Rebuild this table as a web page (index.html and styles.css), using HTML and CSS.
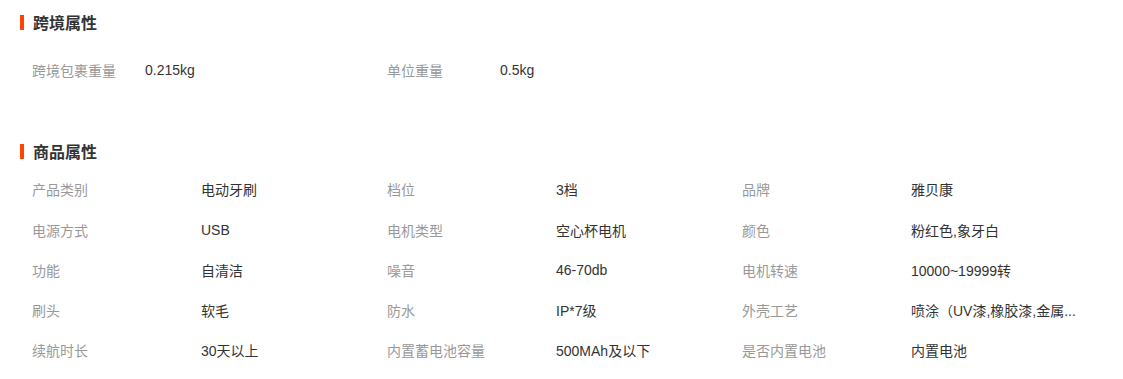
FILE: index.html
```html
<!DOCTYPE html>
<html lang="zh-CN">
<head>
<meta charset="utf-8">
<title>属性</title>
<link rel="stylesheet" href="styles.css">
</head>
<body>
<section class="block block-cross">
  <h2 class="block-title">跨境属性</h2>
  <div class="attr-list attr-list-cross">
    <div class="attr"><span class="attr-label">跨境包裹重量</span><span class="attr-value">0.215kg</span></div>
    <div class="attr"><span class="attr-label">单位重量</span><span class="attr-value">0.5kg</span></div>
  </div>
</section>
<section class="block block-goods">
  <h2 class="block-title">商品属性</h2>
  <div class="attr-list attr-list-goods">
    <div class="attr"><span class="attr-label">产品类别</span><span class="attr-value">电动牙刷</span></div>
    <div class="attr"><span class="attr-label">档位</span><span class="attr-value">3档</span></div>
    <div class="attr"><span class="attr-label">品牌</span><span class="attr-value">雅贝康</span></div>
    <div class="attr"><span class="attr-label">电源方式</span><span class="attr-value">USB</span></div>
    <div class="attr"><span class="attr-label">电机类型</span><span class="attr-value">空心杯电机</span></div>
    <div class="attr"><span class="attr-label">颜色</span><span class="attr-value">粉红色,象牙白</span></div>
    <div class="attr"><span class="attr-label">功能</span><span class="attr-value">自清洁</span></div>
    <div class="attr"><span class="attr-label">噪音</span><span class="attr-value">46-70db</span></div>
    <div class="attr"><span class="attr-label">电机转速</span><span class="attr-value">10000~19999转</span></div>
    <div class="attr"><span class="attr-label">刷头</span><span class="attr-value">软毛</span></div>
    <div class="attr"><span class="attr-label">防水</span><span class="attr-value">IP*7级</span></div>
    <div class="attr"><span class="attr-label">外壳工艺</span><span class="attr-value">喷涂（UV漆,橡胶漆,金属...</span></div>
    <div class="attr"><span class="attr-label">续航时长</span><span class="attr-value">30天以上</span></div>
    <div class="attr"><span class="attr-label">内置蓄电池容量</span><span class="attr-value">500MAh及以下</span></div>
    <div class="attr"><span class="attr-label">是否内置电池</span><span class="attr-value">内置电池</span></div>
  </div>
</section>
</body>
</html>
```

FILE: styles.css
```css
html, body {
  margin: 0;
  padding: 0;
  background: #fff;
}
body {
  font-family: "Liberation Sans", "Noto Sans CJK SC", sans-serif;
  font-size: 14px;
  color: #333;
}
.block {
  padding: 0 20px;
}
.block-cross {
  padding-top: 7px;
}
.block-goods {
  padding-top: 46px;
}
.block-title {
  display: flex;
  align-items: center;
  gap: 9px;
  margin: 0;
  height: 30px;
  font-size: 16px;
  font-weight: bold;
  color: #333;
}
.block-title::before {
  content: "";
  width: 4px;
  height: 15px;
  background: #ff4400;
}
.attr-list {
  display: grid;
  grid-template-columns: repeat(3, 355px);
  padding-left: 12px;
}
.attr-list-cross {
  margin-top: 13px;
}
.attr-list-goods {
  margin-top: 3px;
}
.attr {
  display: flex;
  align-items: center;
  height: 40.25px;
  white-space: nowrap;
}
.attr-label {
  color: #999;
  width: 169px;
  flex: none;
}
.attr-list-cross .attr-label {
  width: 113px;
}
.attr-value {
  color: #333;
}
```
